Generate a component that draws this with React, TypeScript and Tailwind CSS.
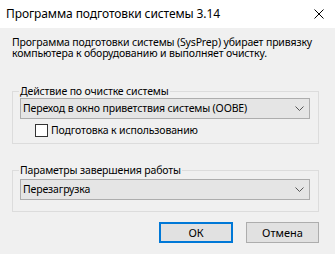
import { useState } from "react";

const font = { fontFamily: '"Noto Sans", "Open Sans", sans-serif' };

function Chevron() {
  return (
    <svg width="9" height="5" viewBox="0 0 9 5" className="text-[#555]">
      <path d="M0.5 0.5 L4.5 4.5 L8.5 0.5" fill="none" stroke="currentColor" strokeWidth="1" />
    </svg>
  );
}

function Combo({ value }: { value: string }) {
  return (
    <div className="flex h-[21px] items-center justify-between border border-[#adadad] bg-[#e5e5e5] pl-[2px] pr-[5px]">
      <span className="text-[10.5px] leading-none tracking-[-0.15px] text-black">{value}</span>
      <Chevron />
    </div>
  );
}

export default function App() {
  const [checked, setChecked] = useState(false);

  return (
    <div className="h-[254px] w-[335px] overflow-hidden bg-[#f0f0f0] text-black" style={font}>
      {/* title bar */}
      <div className="flex h-[28px] items-center justify-between bg-white pl-[6px] pr-[11px]">
        <span className="text-[12px] leading-none tracking-[-0.1px]">Программа подготовки системы 3.14</span>
        <svg width="10" height="10" viewBox="0 0 10 10">
          <path d="M0.5 0.5 L9.5 9.5 M9.5 0.5 L0.5 9.5" stroke="#000" strokeWidth="1" />
        </svg>
      </div>

      <div className="pl-[12px] pr-[14px]">
        <p className="mt-[9px] text-[10.5px] leading-[11px] tracking-[-0.15px]">
          Программа подготовки системы (SysPrep) убирает привязку компьютера к оборудованию и выполняет очистку.
        </p>

        <fieldset className="mr-[2px] mt-[26px] border border-[#dcdcdc] pb-[6px] pl-[7px] pr-[8px]">
          <legend className="ml-[-1px] px-[1px] text-[10.5px] leading-[12px] tracking-[-0.15px]">
            Действие по очистке системы
          </legend>
          <div className="mt-[1px]">
            <Combo value="Переход в окно приветствия системы (OOBE)" />
          </div>
          <label className="mt-[5px] flex items-center gap-[3px] pl-[15px]">
            <button
              onClick={() => setChecked(!checked)}
              className="h-[13px] w-[13px] border border-[#333] bg-white"
            />
            <span className="text-[10.5px] leading-[13px] tracking-[-0.15px]">Подготовка к использованию</span>
          </label>
        </fieldset>

        <fieldset className="mr-[2px] mt-[20px] border border-[#dcdcdc] pb-[11px] pl-[7px] pr-[8px]">
          <legend className="ml-[-1px] px-[1px] text-[10.5px] leading-[12px] tracking-[-0.15px]">
            Параметры завершения работы
          </legend>
          <div className="mt-[3px]">
            <Combo value="Перезагрузка" />
          </div>
        </fieldset>

        <div className="mr-[2px] mt-[10px] flex justify-end gap-[13px]">
          <button className="h-[21px] w-[74px] border-2 border-[#0078d7] bg-[#e1e1e1] text-[11px] leading-none">
            ОК
          </button>
          <button className="h-[21px] w-[73px] border border-[#adadad] bg-[#e1e1e1] text-[11px] leading-none">
            Отмена
          </button>
        </div>
      </div>
    </div>
  );
}
